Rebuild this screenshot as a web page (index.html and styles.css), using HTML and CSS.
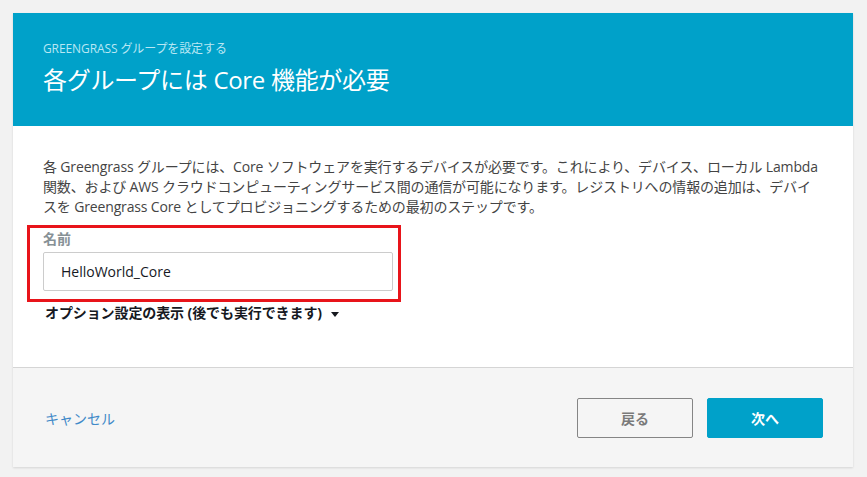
FILE: index.html
```html
<!DOCTYPE html>
<html lang="ja">
<head>
<meta charset="utf-8">
<link rel="stylesheet" href="styles.css">
</head>
<body>
<div class="card">
  <div class="header">
    <div class="eyebrow">GREENGRASS グループを設定する</div>
    <h1 class="title">各グループには Core 機能が必要</h1>
  </div>
  <div class="content">
    <p class="desc">各 Greengrass グループには、Core ソフトウェアを実行するデバイスが必要です。これにより、デバイス、ローカル Lambda 関数、および AWS クラウドコンピューティングサービス間の通信が可能になります。レジストリへの情報の追加は、デバイスを Greengrass Core としてプロビジョニングするための最初のステップです。</p>
    <div class="field">
      <label class="label">名前</label>
      <div class="input">HelloWorld_Core</div>
      <div class="highlight"></div>
    </div>
    <div class="options">オプション設定の表示 (後でも実行できます) <span class="caret"></span></div>
  </div>
  <div class="footer">
    <a class="cancel">キャンセル</a>
    <div class="buttons">
      <button class="btn btn-back">戻る</button>
      <button class="btn btn-next">次へ</button>
    </div>
  </div>
</div>
</body>
</html>
```
FILE: styles.css
```css
html, body {
  margin: 0;
  padding: 0;
  background: #f2f2f2;
}
body {
  padding: 13px;
  font-family: "Open Sans", "Noto Sans CJK JP", sans-serif;
  color: #444;
}
.card {
  width: 840px;
  background: #fff;
  box-shadow: 0 1px 2px rgba(0,0,0,0.12);
}
.header {
  background: #00a1c9;
  height: 113px;
  box-sizing: border-box;
  padding: 28px 30px 0 30px;
}
.eyebrow {
  font-size: 12px;
  line-height: 16px;
  letter-spacing: -0.1px;
  color: #b9e7f4;
}
.title {
  margin: 6px 0 0 0;
  font-size: 24px;
  line-height: 34px;
  font-weight: normal;
  letter-spacing: -0.3px;
  color: #fff;
}
.content {
  padding: 31px 30px 44px 30px;
}
.desc {
  margin: 0;
  font-size: 14px;
  line-height: 20px;
  letter-spacing: -0.15px;
  color: #444;
}
.field {
  position: relative;
  margin-top: 12px;
  width: 350px;
}
.label {
  display: block;
  font-size: 14px;
  line-height: 20px;
  font-weight: bold;
  color: #879196;
  margin-bottom: 3px;
}
.input {
  height: 39px;
  box-sizing: border-box;
  border: 1px solid #ccc;
  border-radius: 2px;
  padding: 0 17px;
  font-size: 14px;
  line-height: 37px;
  color: #16191f;
}
.highlight {
  position: absolute;
  left: -16px;
  top: -4px;
  right: -8px;
  bottom: -11px;
  border: 3px solid #e8141a;
  pointer-events: none;
}
.options {
  margin-top: 12px;
  padding-left: 2px;
  font-size: 14px;
  line-height: 20px;
  font-weight: bold;
  letter-spacing: -0.1px;
  color: #16191f;
}
.caret {
  display: inline-block;
  width: 0;
  height: 0;
  margin-left: 6px;
  vertical-align: middle;
  border-left: 4px solid transparent;
  border-right: 4px solid transparent;
  border-top: 5px solid #16191f;
}
.footer {
  background: #f5f5f5;
  border-top: 1px solid #d5d5d5;
  height: 100px;
  box-sizing: border-box;
  padding: 0 30px 0 32px;
  display: flex;
  align-items: center;
  justify-content: space-between;
}
.cancel {
  font-size: 14px;
  color: #3f89c8;
  cursor: pointer;
}
.buttons {
  display: flex;
  gap: 14px;
}
.btn {
  width: 116px;
  height: 40px;
  border-radius: 2px;
  font-family: "Open Sans", "Noto Sans CJK JP", sans-serif;
  font-size: 14px;
  font-weight: bold;
  cursor: pointer;
}
.btn-back {
  background: #f5f5f5;
  border: 1px solid #858585;
  color: #7a7a7a;
}
.btn-next {
  background: #00a1c9;
  border: 1px solid #00a1c9;
  color: #fff;
}
```
